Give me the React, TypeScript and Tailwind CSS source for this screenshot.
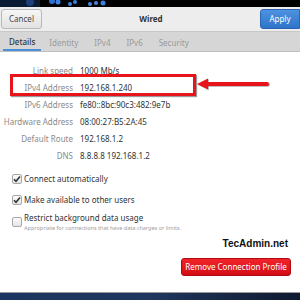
import React from "react";

const rows = [
  { label: "Link speed", value: "1000 Mb/s" },
  { label: "IPv4 Address", value: "192.168.1.240" },
  { label: "IPv6 Address", value: "fe80::8bc:90c3:482:9e7b" },
  { label: "Hardware Address", value: "08:00:27:B5:2A:45" },
  { label: "Default Route", value: "192.168.1.2" },
  { label: "DNS", value: "8.8.8.8 192.168.1.2" },
];

const tabs = ["Details", "Identity", "IPv4", "IPv6", "Security"];

function Check({ on }: { on: boolean }) {
  return (
    <span className="flex h-[10px] w-[10px] items-center justify-center rounded-[2px] border border-[#a8a8a8] bg-gradient-to-b from-[#fbfbfb] to-[#e6e6e6]">
      {on ? (
        <svg width="8" height="8" viewBox="0 0 8 8">
          <path d="M1 4.2 L3 6.2 L7 1.5" fill="none" stroke="#2e3436" strokeWidth="1.6" />
        </svg>
      ) : null}
    </span>
  );
}

export default function App() {
  return (
    <div className="flex h-[300px] w-[300px] flex-col overflow-hidden bg-white font-['Noto_Sans',sans-serif]">
      <div className="relative h-[7px] bg-black">
        <svg className="absolute left-0 top-0" width="120" height="7" viewBox="0 0 120 7">
          <rect x="0" y="0" width="40" height="7" fill="#0b1a33" />
          <circle cx="30" cy="2" r="4" fill="#1d3f7a" />
          <circle cx="52" cy="1" r="3" fill="#2d6fd0" />
          <circle cx="58" cy="2" r="2.5" fill="#3d7fe0" />
          <circle cx="70" cy="4" r="2" fill="#3d7fe0" />
          <circle cx="75" cy="2" r="2" fill="#3d7fe0" />
          <circle cx="90" cy="4" r="2" fill="#4a86e0" />
          <circle cx="96" cy="3" r="2" fill="#4a86e0" />
          <circle cx="103" cy="3" r="2.5" fill="#3d7fe0" />
        </svg>
      </div>
      <div className="flex h-[25px] items-center justify-between border-b border-[#c8c8c8] bg-[#ededed] pl-[1px]">
        <button className="h-[20px] w-[41px] rounded-[3px] border border-[#b8b8b8] bg-gradient-to-b from-[#f6f6f6] to-[#e2e2e2] text-[8px] text-[#444]">
          Cancel
        </button>
        <span className="text-[8px] font-bold text-[#2e3436]">Wired</span>
        <button className="h-[20px] w-[40px] rounded-l-[3px] border border-[#2a66b5] bg-gradient-to-b from-[#4d93e0] to-[#2e74c9] text-[8px] text-white">
          Apply
        </button>
      </div>
      <div className="flex h-[20px] items-stretch border-b border-[#c0c0c0] bg-[#d6d6d6] pl-[3px] text-[8px]">
        {tabs.map((t, i) => (
          <div
            key={t}
            className={
              i === 0
                ? "flex items-center justify-center border-b-[2px] border-[#4a90d9] px-[6px] pt-[2px] font-medium text-[#2e3436]"
                : "flex items-center justify-center px-[8px] pt-[2px] text-[#9a9a9a]"
            }
          >
            {t}
          </div>
        ))}
      </div>
      <div className="relative flex flex-1 flex-col bg-white">
        <div className="mt-[10px] flex flex-col text-[8px]">
          {rows.map((r) => (
            <div key={r.label} className="flex h-[17px] items-center">
              <span className="w-[73px] text-right text-[#8a8a8a]">{r.label}</span>
              <span className="ml-[7px] text-[#2e3436]">{r.value}</span>
            </div>
          ))}
        </div>
        <div className="pointer-events-none absolute left-[10px] top-[22px] h-[22px] w-[186px] border-[3px] border-[#e8141c] shadow-[1px_1px_1px_rgba(0,0,0,0.4)]" />
        <svg className="pointer-events-none absolute left-[195px] top-[25px]" width="76" height="14" viewBox="0 0 76 14">
          <path d="M13 7 H72" stroke="#555" strokeWidth="4" strokeLinecap="round" transform="translate(0.8,0.8)" opacity="0.5" />
          <path d="M2 7 L13 1.5 L13 12.5 Z" fill="#555" transform="translate(0.8,0.8)" opacity="0.5" />
          <path d="M13 7 H72" stroke="#e8141c" strokeWidth="4" strokeLinecap="round" />
          <path d="M2 7 L13 1.5 L13 12.5 Z" fill="#e8141c" />
        </svg>
        <div className="mt-[9px] flex flex-col gap-[9px] pl-[12px] text-[8px] text-[#2e3436]">
          <label className="flex items-center gap-[2px]">
            <Check on />
            <span>Connect automatically</span>
          </label>
          <label className="flex items-center gap-[2px]">
            <Check on />
            <span>Make available to other users</span>
          </label>
          <label className="-mt-[3px] flex items-start gap-[2px]">
            <span className="mt-[5px]">
              <Check on={false} />
            </span>
            <span className="flex flex-col">
              <span>Restrict background data usage</span>
              <span className="text-[5.5px] text-[#a0a0a0]">Appropriate for connections that have data charges or limits.</span>
            </span>
          </label>
        </div>
        <div className="mt-[4px] pr-[12px] text-right font-['Liberation_Sans',sans-serif] text-[10px] font-bold text-[#111]">
          TecAdmin.net
        </div>
        <div className="mt-[7px] flex justify-end pr-[9px]">
          <button className="h-[18px] w-[110px] rounded-[3px] border border-[#b00a10] bg-gradient-to-b from-[#f0242a] to-[#d40c14] text-[8px] text-white">
            Remove Connection Profile
          </button>
        </div>
      </div>
      <div className="h-[8px] border-t border-[#999] bg-gradient-to-r from-[#1c3560] via-[#20375e] to-[#0f1a30]" />
    </div>
  );
}
